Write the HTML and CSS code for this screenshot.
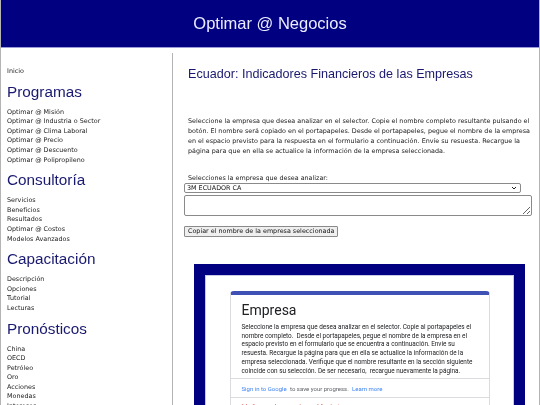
FILE: index.html
```html
<!DOCTYPE html>
<html lang="es">
<head>
<meta charset="utf-8">
<title>Optimar @ Negocios</title>
<link rel="stylesheet" href="styles.css">
</head>
<body>
<div class="page">
  <header class="top">
    <div class="brand">Optimar @ Negocios</div>
  </header>
  <div class="layout">
    <nav class="side">
      <a class="lnk" href="#">Inicio</a>
      <h2 class="sec">Programas</h2>
      <a class="lnk" href="#">Optimar @ Misión</a>
      <a class="lnk" href="#">Optimar @ Industria o Sector</a>
      <a class="lnk" href="#">Optimar @ Clima Laboral</a>
      <a class="lnk" href="#">Optimar @ Precio</a>
      <a class="lnk" href="#">Optimar @ Descuento</a>
      <a class="lnk" href="#">Optimar @ Polipropileno</a>
      <h2 class="sec">Consultoría</h2>
      <a class="lnk" href="#">Servicios</a>
      <a class="lnk" href="#">Beneficios</a>
      <a class="lnk" href="#">Resultados</a>
      <a class="lnk" href="#">Optimar @ Costos</a>
      <a class="lnk" href="#">Modelos Avanzados</a>
      <h2 class="sec">Capacitación</h2>
      <a class="lnk" href="#">Descripción</a>
      <a class="lnk" href="#">Opciones</a>
      <a class="lnk" href="#">Tutorial</a>
      <a class="lnk" href="#">Lecturas</a>
      <h2 class="sec">Pronósticos</h2>
      <a class="lnk" href="#">China</a>
      <a class="lnk" href="#">OECD</a>
      <a class="lnk" href="#">Petróleo</a>
      <a class="lnk" href="#">Oro</a>
      <a class="lnk" href="#">Acciones</a>
      <a class="lnk" href="#">Monedas</a>
      <a class="lnk" href="#">Intereses</a>
    </nav>
    <main class="content">
      <h1 class="title">Ecuador: Indicadores Financieros de las Empresas</h1>
      <p class="intro">Seleccione la empresa que desea analizar en el selector. Copie el nombre completo resultante pulsando el botón. El nombre será copiado en el portapapeles. Desde el portapapeles, pegue el nombre de la empresa en el espacio previsto para la respuesta en el formulario a continuación. Envíe su resuesta. Recargue la página para que en ella se actualice la información de la empresa seleccionada.</p>
      <div class="picker">
        <label class="lbl" for="emp">Selecciones la empresa que desea analizar:</label>
        <div class="selbox">
          <select id="emp" class="sel"><option>3M ECUADOR CA</option></select>
          <svg class="chev" width="6" height="4" viewBox="0 0 6 4" aria-hidden="true"><path d="M1 1 L3 3 L5 1" fill="none" stroke="#222" stroke-width="1"/></svg>
        </div>
        <textarea class="area"></textarea>
        <button class="btn" type="button">Copiar el nombre de la empresa seleccionada</button>
      </div>
      <div class="frame">
        <div class="frame-inner">
          <div class="card">
            <div class="card-head">
              <div class="card-title">Empresa</div>
              <p class="card-desc">Seleccione la empresa que desea analizar en el selector. Copie al portapapeles el nombre completo.&nbsp; Desde el portapapeles, pegue el nombre de la empresa en el espacio previsto en el formulario que se encuentra a continuación. Envíe su resuesta. Recargue la página para que en ella se actualice la información de la empresa seleccionada. Verifique que el nombre resultante en la sección siguiente coincide con su selección. De ser necesario,&nbsp; recargue nuevamente la página.</p>
            </div>
            <div class="card-row"><a class="glink" href="#">Sign in to Google</a> to save your progress. <a class="glink" href="#">Learn more</a></div>
            <div class="card-row req">* Indica que la pregunta es obligatoria</div>
          </div>
        </div>
      </div>
    </main>
  </div>
</div>
</body>
</html>
```
FILE: styles.css
```css
html, body {
  margin: 0;
  padding: 0;
  background: #fff;
}
.page {
  border-left: 1px solid #b4b4b4;
  border-right: 1px solid #b4b4b4;
  min-height: 600px;
  will-change: transform;
}
.top {
  background: #000080;
  height: 47px;
  border-bottom: 1px solid #9a9ad8;
  display: flex;
  align-items: center;
  justify-content: center;
}
.brand {
  font-family: "Liberation Sans", Arial, sans-serif;
  font-size: 16.5px;
  color: #ececff;
  margin-top: -1px;
}
.layout {
  display: flex;
  padding-top: 5px;
}
.side {
  width: 165px;
  flex: none;
  padding: 14px 0 20px 6px;
  border-right: 1px solid #b4b4b4;
  display: flex;
  flex-direction: column;
  align-items: flex-start;
}
.lnk {
  font-family: "DejaVu Sans", Verdana, sans-serif;
  font-size: 6.4px;
  line-height: 9.6px;
  color: #222;
  text-decoration: none;
}
.sec {
  font-family: "Liberation Sans", Arial, sans-serif;
  font-weight: normal;
  font-size: 15.3px;
  line-height: 17px;
  color: #191970;
  margin: 6px 0 8px;
}
.content {
  flex: 1;
  padding: 0 4px 0 11px;
  font-family: "DejaVu Sans", Verdana, sans-serif;
}
.title {
  font-family: "Liberation Sans", Arial, sans-serif;
  font-weight: normal;
  font-size: 12.6px;
  line-height: 15px;
  color: #191970;
  margin: 14px 0 0 4px;
}
.intro {
  font-size: 6.4px;
  line-height: 10px;
  color: #1a1a1a;
  margin: 34px 0 0 4px;
}
.picker {
  margin-top: 17px;
  display: flex;
  flex-direction: column;
  align-items: flex-start;
}
.lbl {
  font-size: 6.4px;
  line-height: 10px;
  color: #1a1a1a;
  margin-left: 4px;
}
.selbox {
  width: 337px;
  position: relative;
}
.sel {
  display: block;
  width: 337px;
  height: 10px;
  box-sizing: border-box;
  font-family: "DejaVu Sans", Verdana, sans-serif;
  font-size: 6.4px;
  line-height: 8px;
  padding: 0 10px 0 2px;
  border: 1px solid #8a8a8a;
  border-radius: 2px;
  background: #fff;
  color: #111;
  -webkit-appearance: none;
  appearance: none;
}
.chev {
  position: absolute;
  right: 4px;
  top: 3px;
}
.area {
  display: block;
  width: 348px;
  height: 21px;
  box-sizing: border-box;
  margin-top: 2px;
  border: 1px solid #8a8a8a;
  border-radius: 2px;
  resize: both;
}
.btn {
  margin-top: 10px;
  font-family: "DejaVu Sans", Verdana, sans-serif;
  font-size: 6.4px;
  height: 11px;
  line-height: 9px;
  padding: 0 3px;
  border: 1px solid #8a8a8a;
  border-radius: 1px;
  background: #efefef;
  color: #111;
}
.frame {
  margin: 27px 10px 0 10px;
  border: 11px solid #000080;
  border-bottom: none;
}
.frame-inner {
  border: 1px solid #c9cbe6;
  border-bottom: none;
  padding-top: 15px;
  min-height: 200px;
}
.card {
  width: 260px;
  margin: 0 auto;
  box-sizing: border-box;
  border: 1px solid #dadce0;
  border-top: 4px solid #3f51b5;
  border-radius: 4px 4px 0 0;
  font-family: Roboto, "Liberation Sans", Arial, sans-serif;
  color: #202124;
}
.card-head {
  padding: 7px 9px 3px 11px;
  border-bottom: 1px solid #dadce0;
}
.card-title {
  font-size: 14px;
  line-height: 16px;
  color: #202124;
}
.card-desc {
  font-size: 6.4px;
  line-height: 8.7px;
  margin: 5px 0 0;
  color: #202124;
}
.card-row {
  padding: 0 11px;
  height: 18px;
  display: flex;
  align-items: center;
  gap: 0.3em;
  font-size: 6px;
  color: #5f6368;
  border-bottom: 1px solid #dadce0;
  white-space: pre;
}
.glink {
  color: #4285f4;
  text-decoration: none;
}
.req {
  color: #d93025;
  align-items: flex-start;
  padding-top: 4px;
  box-sizing: border-box;
}
```
